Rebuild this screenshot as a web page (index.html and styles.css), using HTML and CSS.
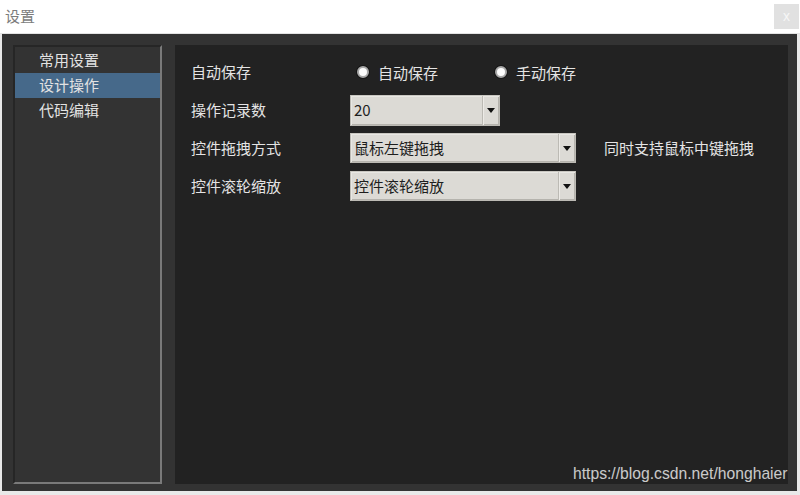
FILE: index.html
```
<!DOCTYPE html>
<html>
<head>
<title>设置</title>
<link rel="stylesheet" href="styles.css">
</head>
<body>

<div id="titleBar">
    <span class="title">设置</span>
    <button class="close">x</button>
</div>

<div id="frame">
    <div id="navList">
        <div class="nav-item">常用设置</div>
        <div class="nav-item selected">设计操作</div>
        <div class="nav-item">代码编辑</div>
    </div>

    <div id="panel">
        <div class="row">
            <div class="label">自动保存</div>
            <div class="radios">
                <label class="radio"><span class="dot"></span>自动保存</label>
                <label class="radio"><span class="dot"></span>手动保存</label>
            </div>
        </div>
        <div class="row">
            <div class="label">操作记录数</div>
            <div class="combo short"><span class="value">20</span><span class="arrow"></span></div>
        </div>
        <div class="row">
            <div class="label">控件拖拽方式</div>
            <div class="combo"><span class="value">鼠标左键拖拽</span><span class="arrow"></span></div>
            <div class="note">同时支持鼠标中键拖拽</div>
        </div>
        <div class="row">
            <div class="label">控件滚轮缩放</div>
            <div class="combo"><span class="value">控件滚轮缩放</span><span class="arrow"></span></div>
        </div>
    </div>
</div>

<div id="watermark">https://blog.csdn.net/honghaier</div>

</body>
</html>
```

FILE: styles.css
```
body {
    margin: 0;
    width: 800px;
    height: 495px;
    background: #e9e9e9;
    font-family: "Noto Sans CJK SC", "Liberation Sans", sans-serif;
    font-size: 15px;
    position: relative;
    overflow: hidden;
}

#titleBar {
    height: 33px;
    background: #fff;
    display: flex;
    align-items: center;
    justify-content: space-between;
    border-bottom: 1px solid #e4e4e4;
}

.title {
    color: #7c7c7c;
    margin-left: 5px;
    margin-top: -2px;
}

.close {
    width: 25px;
    height: 25px;
    margin-right: 1px;
    margin-top: -1px;
    border: none;
    background: #e1e1e1;
    color: #f6f6f6;
    font-family: "Liberation Sans", sans-serif;
    font-size: 14px;
    padding: 0;
}

#frame {
    margin-left: 2px;
    width: 795px;
    height: 457px;
    box-sizing: border-box;
    background: #333;
    padding: 11px 9px 7px 11px;
    display: flex;
    gap: 13px;
}

#navList {
    width: 149px;
    box-sizing: border-box;
    background: #333;
    border-top: 2px solid #262626;
    border-left: 2px solid #262626;
    border-right: 2px solid #7a7a7a;
    border-bottom: 2px solid #7a7a7a;
    padding-top: 1px;
}

.nav-item {
    height: 25px;
    line-height: 23px;
    padding-left: 24px;
    color: #e2e2e2;
}

.nav-item.selected {
    background: #46698a;
}

#panel {
    flex: 1;
    background: #222;
    padding: 12px 0 0 16px;
    display: flex;
    flex-direction: column;
    gap: 8px;
}

.row {
    height: 30px;
    display: flex;
    align-items: center;
}

.label {
    width: 159px;
    color: #e4e4e4;
    margin-top: -2px;
}

.radios {
    display: flex;
    gap: 57px;
    padding-left: 7px;
}

.radio {
    display: flex;
    align-items: center;
    gap: 9px;
    color: #e4e4e4;
}

.dot {
    width: 8px;
    height: 8px;
    border-radius: 50%;
    background: #fcfcfc;
    border: 2px solid #a8a8a8;
    box-shadow: 0 0 0 1px #151515;
}

.combo {
    width: 226px;
    height: 30px;
    box-sizing: border-box;
    display: flex;
    background: #dcdad5;
    border: 1px solid #bcbab4;
    border-top-color: #c9c7c1;
    box-shadow: inset 1px 1px 0 #e8e7e3, inset -1px -1px 0 #b5b3ad;
}

.combo.short {
    width: 150px;
    height: 31px;
}

.value {
    flex: 1;
    padding-left: 3px;
    line-height: 27px;
    color: #1e1e1e;
}

.arrow {
    width: 16px;
    border-left: 1px solid #bcbab4;
    box-shadow: inset 1px 0 0 #eceae6;
    position: relative;
}

.arrow::after {
    content: "";
    position: absolute;
    left: 4px;
    top: 12px;
    border-left: 4px solid transparent;
    border-right: 4px solid transparent;
    border-top: 5px solid #111;
}

.note {
    margin-left: 28px;
    margin-top: -2px;
    color: #e4e4e4;
}

#watermark {
    position: absolute;
    left: 573px;
    top: 465px;
    font-family: "Liberation Sans", sans-serif;
    font-size: 15.7px;
    color: #c9c9c9;
    text-shadow: 0 0 1px #333;
}
```
